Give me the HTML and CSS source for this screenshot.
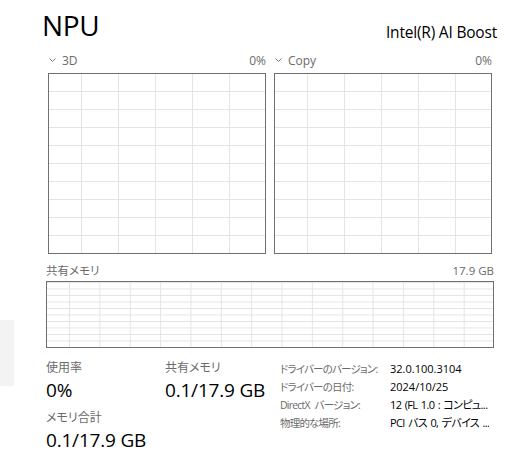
FILE: index.html
```html
<!DOCTYPE html>
<html lang="ja">
<head>
<meta charset="utf-8">
<link rel="stylesheet" href="styles.css">
</head>
<body>
<div class="app">
  <aside class="side"><div class="side-sel"></div></aside>
  <main class="main">
    <header class="head">
      <h1 class="title">NPU</h1>
      <div class="model">Intel(R) AI Boost</div>
    </header>
    <div class="graphs">
      <section class="graph">
        <div class="glabel">
          <span class="gname"><svg class="chev" width="7" height="4" viewBox="0 0 7 4"><polyline points="0.5,0.5 3.5,3.5 6.5,0.5" fill="none" stroke="#7a7a7a" stroke-width="1"/></svg>3D</span>
          <span class="gval">0%</span>
        </div>
        <div class="chart chart-big"></div>
      </section>
      <section class="graph">
        <div class="glabel">
          <span class="gname"><svg class="chev" width="7" height="4" viewBox="0 0 7 4"><polyline points="0.5,0.5 3.5,3.5 6.5,0.5" fill="none" stroke="#7a7a7a" stroke-width="1"/></svg>Copy</span>
          <span class="gval">0%</span>
        </div>
        <div class="chart chart-big"></div>
      </section>
    </div>
    <section class="mem">
      <div class="glabel mlabel">
        <span class="gname jp">共有メモリ</span>
        <span class="gval">17.9 GB</span>
      </div>
      <div class="chart chart-wide"></div>
    </section>
    <div class="stats">
      <div class="stat-col">
        <div class="stat">
          <div class="slabel jp">使用率</div>
          <div class="svalue">0%</div>
        </div>
        <div class="stat">
          <div class="slabel jp">メモリ合計</div>
          <div class="svalue">0.1/17.9 GB</div>
        </div>
      </div>
      <div class="stat-col col2">
        <div class="stat">
          <div class="slabel jp">共有メモリ</div>
          <div class="svalue">0.1/17.9 GB</div>
        </div>
      </div>
      <dl class="props">
        <dt class="jp">ドライバーのバージョン:</dt><dd>32.0.100.3104</dd>
        <dt class="jp">ドライバーの日付:</dt><dd>2024/10/25</dd>
        <dt class="jp">DirectX バージョン:</dt><dd class="jp">12 (FL 1.0 : コンピュ...</dd>
        <dt class="jp">物理的な場所:</dt><dd class="jp">PCI バス 0, デバイス ...</dd>
      </dl>
    </div>
  </main>
</div>
</body>
</html>
```

FILE: styles.css
```css
* { box-sizing: border-box; }
html, body { margin: 0; padding: 0; background: #ffffff; }
body {
  font-family: "Open Sans", "Noto Sans CJK JP", sans-serif;
  color: #000;
  width: 514px;
  height: 458px;
  overflow: hidden;
}
.jp { font-family: "Open Sans", "Noto Sans CJK JP", sans-serif; font-feature-settings: "palt"; }
.app { display: flex; height: 458px; }
.side { width: 14px; flex: none; }
.side-sel { margin-top: 320px; height: 66px; background: #f3f3f3; }
.main { flex: 1; min-width: 0; padding: 0 20px 0 32px; display: flex; flex-direction: column; }

.head { display: flex; justify-content: space-between; align-items: flex-end; height: 50px; }
.title { margin: 0 0 0 -4px; font-weight: 400; font-size: 28px; line-height: 34px; padding-bottom: 8px; letter-spacing: -0.3px; }
.model { font-size: 15.5px; line-height: 20px; padding-bottom: 8px; margin-right: -3px; letter-spacing: -0.2px; }

.graphs { display: grid; grid-template-columns: 1fr 1fr; gap: 8px; padding: 0 2px; }
.glabel { display: flex; justify-content: space-between; align-items: center; height: 20px; margin-bottom: 3px; font-size: 12px; color: #6b6b6b; }
.gname { display: flex; align-items: center; }
.chev { margin: 0 6px 0 1px; }
.chart { border: 1px solid #707070; background-color: #fff; }
.chart-big {
  height: 181px;
  background-image:
    linear-gradient(to right, #e4e4e4 1px, transparent 1px),
    linear-gradient(to bottom, #e4e4e4 1px, transparent 1px);
  background-size: 37px 100%, 100% 18px;
  background-position: 32px 0, 0 17px;
}
.mem { margin-top: 6px; }
.mlabel { margin-bottom: 1px; font-size: 11.5px; }
.chart-wide {
  height: 67px;
  background-image:
    linear-gradient(to right, #e4e4e4 1px, transparent 1px),
    linear-gradient(to bottom, #e4e4e4 1px, transparent 1px);
  background-size: 30.36px 100%, 100% 6.5px;
  background-position: 22px 0, 0 6.5px;
}

.stats { display: flex; margin-top: 12px; padding-left: 0; }
.stat-col { width: 119px; flex: none; }
.col2 { width: 113px; }
.stat + .stat { margin-top: 8px; }
.slabel { font-size: 12px; line-height: 16px; height: 16px; color: #6b6b6b; }
.svalue { font-size: 19px; line-height: 24px; height: 24px; margin-top: 2px; letter-spacing: -0.2px; }
.props { margin: 0; padding-left: 2px; display: grid; grid-template-columns: 110px auto; grid-auto-rows: 18px; font-size: 11px; line-height: 18px; white-space: nowrap; min-width: 0; overflow: hidden; }
.props dt { color: #6b6b6b; font-size: 10.5px; letter-spacing: -0.8px; word-spacing: 3px; overflow: hidden; }
.props dd { margin: 0; color: #000; overflow: hidden; }
.props dd.jp { letter-spacing: -0.6px; word-spacing: 1px; }
```
